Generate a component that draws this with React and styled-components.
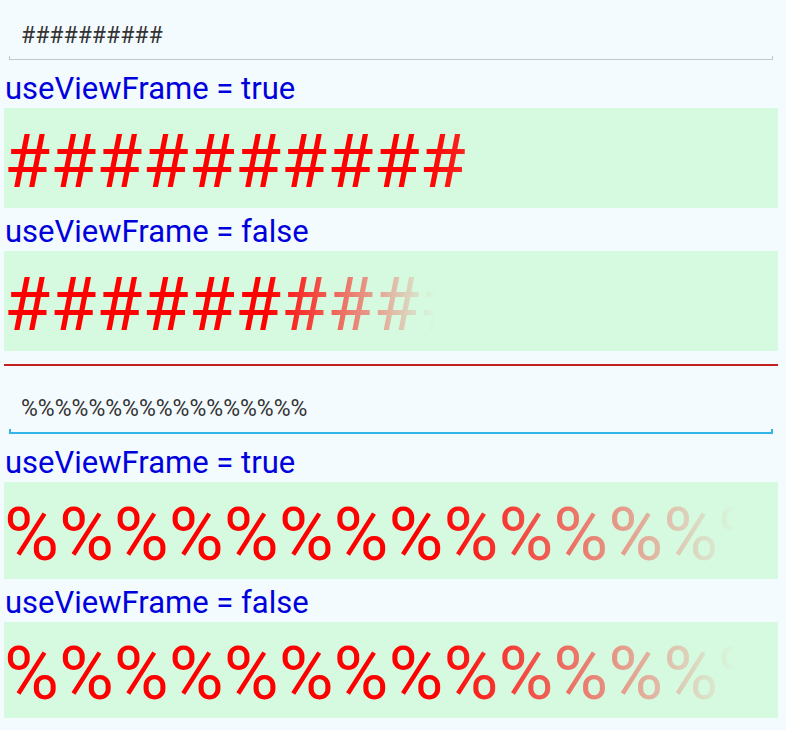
import React from "react"
import styled, { createGlobalStyle } from "styled-components"

const GlobalStyle = createGlobalStyle`
	html, body {
		margin: 0;
		padding: 0;
		background: #f4fbff;
	}
	body {
		font-family: Roboto, "Noto Sans", sans-serif;
	}
`

const samples = [
	{
		text: "##########",
		focused: false,
		rows: [
			{ label: "useViewFrame = true", width: 700, fade: 420, height: 100 },
			{ label: "useViewFrame = false", width: 431, fade: 262, height: 100 },
		],
	},
	{
		text: "%%%%%%%%%%%%%%%%%",
		focused: true,
		rows: [
			{ label: "useViewFrame = true", width: 732, fade: 430, height: 97 },
			{ label: "useViewFrame = false", width: 732, fade: 430, height: 96 },
		],
	},
]

const EditField = ({ value, focused, top }) => (
	<Field $top={top}>
		<FieldText>{value}</FieldText>
		<Underline $focused={focused} />
	</Field>
)

const Sample = ({ label, text, width, fade, height, first }) => (
	<>
		<Label $extra={first ? 5 : 0}>{label}</Label>
		<Panel $height={height}>
			<FadeText $width={width} $fade={fade}>
				{text}
			</FadeText>
		</Panel>
	</>
)

export default function App() {
	return (
		<>
			<GlobalStyle />
			<Screen>
				{samples.map((s, i) => (
					<Block key={i}>
						{i > 0 && <Divider />}
						<EditField value={s.text} focused={s.focused} top={i > 0 ? 31 : 24} />
						{s.rows.map((r, j) => (
							<Sample
								key={j}
								first={j === 0}
								text={s.text}
								label={r.label}
								width={r.width}
								fade={r.fade}
								height={r.height}
							/>
						))}
					</Block>
				))}
			</Screen>
		</>
	)
}

const Screen = styled.div`
	display: flex;
	flex-direction: column;
	min-height: 100vh;
	box-sizing: border-box;
	padding: 0 8px 0 4px;
	background: #f4fbff;
`
const Block = styled.section`
	display: flex;
	flex-direction: column;
`
const Field = styled.div`
	display: flex;
	flex-direction: column;
	margin: 0 5px;
	padding-top: ${(p) => p.$top}px;
`
const FieldText = styled.div`
	padding-left: 12px;
	font-size: 23px;
	line-height: 24px;
	color: #333333;
	white-space: nowrap;
`
const Underline = styled.div`
	margin-top: 8px;
	height: ${(p) => (p.$focused ? 5 : 4)}px;
	box-sizing: border-box;
	border-style: solid;
	border-color: ${(p) => (p.$focused ? "#33b5e5" : "#c4c8cc")};
	border-width: ${(p) => (p.$focused ? "0 2px 2px 2px" : "0 1px 1px 1px")};
`
const Label = styled.div`
	margin-top: ${(p) => p.$extra}px;
	padding: 7px 0 3px 1px;
	font-size: 31px;
	line-height: 33px;
	color: #0000dd;
	white-space: nowrap;
`
const Panel = styled.div`
	display: flex;
	align-items: center;
	box-sizing: border-box;
	height: ${(p) => p.$height}px;
	padding-top: 6px;
	background: #d6fadf;
	overflow: hidden;
`
const FadeText = styled.div`
	width: ${(p) => p.$width}px;
	overflow: hidden;
	white-space: nowrap;
	font-size: 75px;
	line-height: 88px;
	color: #ff0000;
	-webkit-mask-image: linear-gradient(
		to right,
		#000 ${(p) => p.$fade}px,
		rgba(0, 0, 0, 0) ${(p) => p.$width}px
	);
	mask-image: linear-gradient(
		to right,
		#000 ${(p) => p.$fade}px,
		rgba(0, 0, 0, 0) ${(p) => p.$width}px
	);
`
const Divider = styled.div`
	margin-top: 13px;
	height: 2px;
	background: #c42020;
`
